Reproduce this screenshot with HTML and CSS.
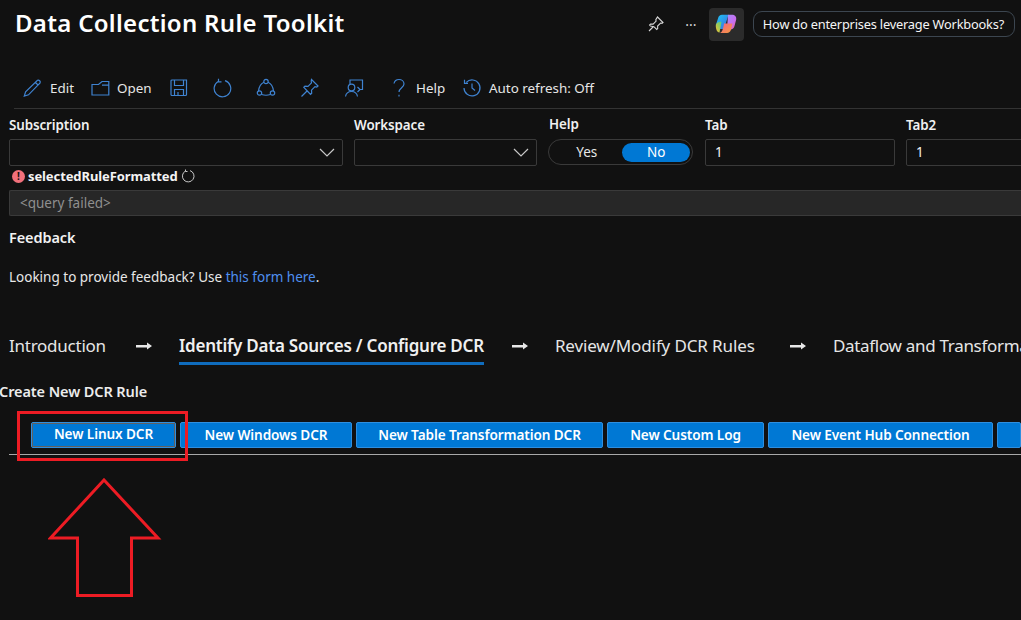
FILE: index.html
```html
<!DOCTYPE html>
<html lang="en">
<head>
<meta charset="utf-8">
<title>Data Collection Rule Toolkit</title>
<link rel="stylesheet" href="styles.css">
</head>
<body>
<div class="page">
  <header class="header">
    <h1 class="title">Data Collection Rule Toolkit</h1>
    <div class="header-actions">
      <svg class="hdr-pin" width="18" height="18" viewBox="0 0 18 18" fill="none" stroke="#d6d6d6" stroke-width="1.1"><path d="M10.500 2 16 7.500l-1 .8-1.400-.3-3 3 .1 2.500-1 1L6.900 11.700 3.500 11l-.9-1 1-1 2.500.1 3-3-.3-1.400zM6.500 11.500 2 16"/></svg>
      <span class="dots">···</span>
      <span class="copilot">
        <svg width="22" height="20" viewBox="0 0 22 20">
          <defs>
            <linearGradient id="cg1" x1="0" y1="0" x2="1" y2="1"><stop offset="0" stop-color="#1fc8f5"/><stop offset=".6" stop-color="#2f8fe8"/><stop offset="1" stop-color="#3f6fe0"/></linearGradient>
            <linearGradient id="cg2" x1="0" y1="0" x2="1" y2="1"><stop offset="0" stop-color="#a98cf8"/><stop offset=".6" stop-color="#c86cf0"/><stop offset="1" stop-color="#f2637a"/></linearGradient>
            <linearGradient id="cg3" x1="0" y1="1" x2="1" y2="0"><stop offset="0" stop-color="#fbc22c"/><stop offset="1" stop-color="#4fd080"/></linearGradient>
            <linearGradient id="cg4" x1="0" y1="0" x2="1" y2="1"><stop offset="0" stop-color="#f0608a"/><stop offset="1" stop-color="#f79a3c"/></linearGradient>
          </defs>
          <path d="M7 .8h6.500L9 15H5.500C2.500 15 .5 13 1 10.500L3 4.500C3.600 2 5 .8 7 .8z" fill="url(#cg1)"/>
          <path d="M1 10.500c1-2 3.500-3 5.500-2.500L4.500 18.500H4C1.500 18 .3 13 1 10.500z" fill="url(#cg3)"/>
          <path d="M13 .8h4c2.700 0 4.700 2 4.200 4.700L19.500 12c-.5 2-2 3.500-4 3.500H12z" fill="url(#cg2)"/>
          <path d="M9 9.500h8.500l-1.500 6c-.5 2-2 3.500-4 3.500H4.500C7.500 19 8.500 13 9 9.500z" fill="url(#cg4)"/>
        </svg>
      </span>
      <span class="prompt">How do enterprises leverage Workbooks?</span>
    </div>
  </header>

  <nav class="toolbar">
    <span class="tool tool-edit">
      <svg width="20" height="20" viewBox="0 0 20 20" class="ico"><path d="M15.500 2.300a2 2 0 0 1 2.600 2.600L6.500 16.800l-4.200 1.300 1.300-4.200zM13.500 4.500l2.500 2.500"/></svg>
      <span>Edit</span>
    </span>
    <span class="tool tool-open">
      <svg width="20" height="20" viewBox="0 0 20 20" class="ico"><path d="M2 17V6.500h6.500L12 3.500h6.800V17zM12 7.200h6.800M2 6.500 8.500 6.500"/></svg>
      <span>Open</span>
    </span>
    <svg width="20" height="20" viewBox="0 0 20 20" class="ico icon-only save"><path d="M3 2h14.500v14.500a1 1 0 0 1-1 1H3a1 1 0 0 1-1-1V3a1 1 0 0 1 1-1zM5.500 2v5.500h9V2M5.500 17.500v-6h9v6M9 14v3.500"/></svg>
    <svg width="20" height="20" viewBox="0 0 20 20" class="ico icon-only redo"><path d="M6.500 3.200A8.300 8.300 0 1 0 13 2.600M6.500 .8v3h3"/></svg>
    <svg width="20" height="20" viewBox="0 0 20 20" class="ico icon-only share"><circle cx="10" cy="3.500" r="2.200"/><circle cx="3.500" cy="15" r="2.200"/><circle cx="16.500" cy="15" r="2.200"/><path d="M7.900 4.200C5 5.500 3 8.500 2.500 13M12.100 4.200c3 1.300 4.900 4.300 5.400 8.800M5.700 16.500c2.800 1 5.800 1 8.600 0"/></svg>
    <svg width="20" height="20" viewBox="0 0 20 20" class="ico icon-only pin"><path d="M11.500 1.500 18 8l-1.200 1-1.800-.3-3.500 3.500.2 3-1.200 1.200L7.300 13 3.800 9.300l1.200-1.200 3 .2 3.500-3.500-.3-1.800zM7 13l-5.500 5.500"/></svg>
    <svg width="20" height="20" viewBox="0 0 20 20" class="ico icon-only feedback"><path d="M6 6V2h12.500v9.500H16M16 11.500l-2.500-2.500M16 11.500l-2.500 2.500"/><circle cx="7.500" cy="9.500" r="3.300"/><path d="M1.500 18.500c.5-3 2.800-5 6-5s5.500 2 6 5"/></svg>
    <span class="tool tool-help">
      <svg width="14" height="20" viewBox="0 0 14 20" class="ico"><path d="M2 5.500C2.500 3 4.500 1.500 7 1.500s5 1.700 5 4.500c0 3.500-5 4-5 8"/><path d="M7 16.800v1.600"/></svg>
      <span>Help</span>
    </span>
    <span class="tool tool-auto">
      <svg width="20" height="20" viewBox="0 0 20 20" class="ico"><path d="M4.300 4.300A8 8 0 1 1 2 10M2.500 1.800v3.500H6M10 5.500V10l3 2.500"/></svg>
      <span>Auto refresh: Off</span>
    </span>
  </nav>

  <section class="params">
    <div class="field f-sub">
      <label class="lbl">Subscription</label>
      <div class="box select"><svg width="16" height="9" viewBox="0 0 16 9" class="chev"><path d="M1 1l7 7 7-7"/></svg></div>
    </div>
    <div class="field f-work">
      <label class="lbl">Workspace</label>
      <div class="box select"><svg width="16" height="9" viewBox="0 0 16 9" class="chev"><path d="M1 1l7 7 7-7"/></svg></div>
    </div>
    <div class="field f-help">
      <label class="lbl lbl-help">Help</label>
      <div class="toggle"><span class="opt">Yes</span><span class="opt opt-on">No</span></div>
    </div>
    <div class="field f-tab">
      <label class="lbl">Tab</label>
      <div class="box text">1</div>
    </div>
    <div class="field f-tab2">
      <label class="lbl">Tab2</label>
      <div class="box text">1</div>
    </div>
  </section>

  <section class="failed">
    <div class="failed-label">
      <span class="err">!</span>
      <span class="failed-name">selectedRuleFormatted</span>
      <svg width="14" height="14" viewBox="0 0 14 14" class="spin"><path d="M4.500 2A5.800 5.800 0 1 0 9 1.600M4.500 .5v2h2"/></svg>
    </div>
    <div class="failed-box">&lt;query failed&gt;</div>
  </section>

  <section class="feedback-sec">
    <h2 class="fb-title">Feedback</h2>
    <p class="fb-text">Looking to provide feedback? Use <a class="link">this form here</a>.</p>
  </section>

  <div class="tabs">
    <span class="tab t1">Introduction</span>
    <svg class="arrow" width="16" height="28" viewBox="0 0 16 28"><path d="M0 12h11V9.500l5 3.500-5 3.500V14.500H0z"/></svg>
    <span class="tab tab-on">Identify Data Sources / Configure DCR</span>
    <svg class="arrow" width="16" height="28" viewBox="0 0 16 28"><path d="M0 12h11V9.500l5 3.500-5 3.500V14.500H0z"/></svg>
    <span class="tab t3">Review/Modify DCR Rules</span>
    <svg class="arrow" width="16" height="28" viewBox="0 0 16 28"><path d="M0 12h11V9.500l5 3.500-5 3.500V14.500H0z"/></svg>
    <span class="tab t4">Dataflow and Transformation</span>
  </div>

  <h3 class="create">Create New DCR Rule</h3>

  <div class="buttons">
    <span class="btn b1"><span class="focus">New Linux DCR</span></span>
    <span class="btn b2">New Windows DCR</span>
    <span class="btn b3">New Table Transformation DCR</span>
    <span class="btn b4">New Custom Log</span>
    <span class="btn b5">New Event Hub Connection</span>
    <span class="btn b6"></span>
  </div>
  <div class="rule"></div>

  <div class="mark-rect"></div>
  <svg class="mark-arrow" width="114" height="122" viewBox="0 0 114 122"><path d="M56 2 2.500 60h27v57.500h54V60H110z"/></svg>
</div>
</body>
</html>
```
FILE: styles.css
```css
* { box-sizing: border-box; }
html, body { margin: 0; padding: 0; background: #111111; }
body { font-family: "Noto Sans", "Open Sans", "Liberation Sans", sans-serif; color: #f2f2f2; font-size: 13px; }
.page { position: relative; width: 1021px; height: 620px; overflow: hidden; background: #111111; }

.header { display: flex; justify-content: space-between; align-items: center; height: 48px; padding: 0 6px 0 15px; }
.title { margin: 0 0 2px; font-size: 24px; font-weight: 600; color: #fff; line-height: 46px; letter-spacing: .3px; }
.header-actions { display: flex; align-items: center; }
.hdr-pin { margin-right: 19px; }
.dots { width: 14px; margin-right: 11px; text-align: center; color: #d6d6d6; font-size: 14px; }
.copilot { display: flex; align-items: center; justify-content: center; width: 35px; height: 33px; background: #2b2b2b; border-radius: 4px; margin-right: 9px; }
.prompt { height: 26px; line-height: 24px; padding: 0 10px 0 9px; border: 1px solid #3c4650; border-radius: 9px; font-size: 12.800px; color: #f5f5f5; white-space: nowrap; letter-spacing: -.2px; }

.toolbar { display: flex; align-items: center; height: 39px; margin: 22px 0 0 14px; border-bottom: 1px solid #333; padding-bottom: 2px; color: #e6e6e6; }
.tool { display: flex; align-items: center; }
.ico { fill: none; stroke: #3f83d1; stroke-width: 1.200; flex: none; }
.tool-edit { margin-left: 8px; gap: 8px; width: 68px; }
.tool-open { gap: 7px; width: 79px; }
.icon-only.save { margin-right: 23px; }
.icon-only.redo { margin-right: 24px; }
.icon-only.share { margin-right: 24px; }
.icon-only.pin { margin-right: 24px; }
.icon-only.feedback { margin-right: 28px; }
.tool-help { gap: 10px; width: 70px; }
.tool-auto { gap: 7px; }
.tool span { font-size: 13.400px; }

.params { display: flex; height: 58px; padding: 8px 0 0 9px; }
.field { flex: none; display: flex; flex-direction: column; }
.lbl { height: 22px; line-height: 16px; font-size: 13.400px; font-weight: 600; color: #f0f0f0; letter-spacing: -.1px; }
.f-sub { width: 345px; }
.f-work { width: 195px; }
.f-help { width: 156px; }
.f-help .lbl { margin-top: -1px; height: 23px; line-height: 17px; }
.f-tab { width: 201px; }
.f-tab2 { width: 130px; }
.box { height: 27px; border: 1px solid #3a3a3a; border-radius: 2px; position: relative; }
.f-sub .box { width: 334px; }
.f-work .box { width: 183px; }
.f-tab .box { width: 190px; }
.f-tab2 .box { width: 130px; }
.select { display: flex; align-items: center; justify-content: flex-end; padding-right: 7px; }
.chev { fill: none; stroke: #c8c8c8; stroke-width: 1.200; }
.text { line-height: 25px; padding-left: 9px; font-size: 13.500px; color: #f2f2f2; }
.toggle { display: flex; align-items: center; width: 145px; height: 26px; margin-left: -1px; border: 1px solid #3a3a3a; border-radius: 13px; padding: 0 2px 0 2px; }
.opt { width: 72px; height: 19px; line-height: 18px; text-align: center; font-size: 13.500px; color: #e8e8e8; border-radius: 10px; }
.opt-on { background: #0078d4; color: #fff; width: 68px; }

.failed { padding: 0 0 0 9px; margin-top: -2px; }
.failed-label { display: flex; align-items: center; height: 22px; margin: 0 0 3px 3px; }
.err { width: 13px; height: 13px; border-radius: 50%; background: #f1707b; color: #111; font-size: 10px; font-weight: 700; line-height: 13px; text-align: center; margin-right: 3px; }
.failed-name { font-size: 13px; font-weight: 700; color: #f4f4f4; letter-spacing: -.1px; margin-right: 3px; }
.spin { fill: none; stroke: #c8c8c8; stroke-width: 1; }
.failed-box { height: 26px; line-height: 24px; width: 1012px; padding-left: 10px; background: #272727; border: 1px solid #3a3a3a; border-right: 0; border-radius: 2px 0 0 2px; color: #8f8f8f; font-size: 13.500px; }

.feedback-sec { padding-left: 9px; }
.fb-title { margin: 11px 0 0; font-size: 14.500px; font-weight: 600; line-height: 20px; color: #f2f2f2; letter-spacing: -.1px; }
.fb-text { margin: 21px 0 0; font-size: 13.500px; line-height: 18px; color: #e8e8e8; }
.link { color: #4f8ff0; }

.tabs { display: flex; align-items: flex-start; height: 32px; margin-top: 47px; padding-left: 9px; white-space: nowrap; }
.tab { flex: none; display: block; height: 32px; line-height: 26px; font-size: 17px; color: #e6e6e6; letter-spacing: -.25px; }
.t1 { width: 127px; }
.tab-on { font-weight: 600; border-bottom: 3px solid #0f6cbd; color: #f0f0f0; letter-spacing: -.24px; }
.arrow { flex: none; fill: #e8e8e8; }
.t1 + .arrow { margin-right: 27px; }
.tab-on + .arrow { margin-left: 28px; margin-right: 27px; }
.t3 { width: 200px; margin-right: 35px; letter-spacing: -.12px; }
.t3 + .arrow { margin-right: 27px; }
.t4 { width: 188px; letter-spacing: -.3px; overflow: hidden; }

.create { margin: 16px 0 0 -1px; font-size: 14.500px; font-weight: 600; line-height: 20px; color: #ececec; letter-spacing: -.1px; }

.buttons { display: flex; gap: 4px; margin: 21px 0 0 31px; white-space: nowrap; }
.btn { flex: none; height: 26px; line-height: 23px; background: #0078d4; border: 1px solid #2f8fdf; border-radius: 2px; color: #fff; text-align: center; font-size: 13.600px; font-weight: 600; letter-spacing: -.1px; }
.focus { display: block; height: 22px; margin: 1px; line-height: 20px; outline: 1px solid #606060; }
.b1 { width: 145px; }
.b2 { width: 172px; }
.b3 { width: 247px; }
.b4 { width: 157px; }
.b5 { width: 225px; }
.b6 { width: 24px; }
.rule { height: 1px; margin: 6px 0 0 9px; background: #a8a8a8; }

.mark-rect { position: absolute; left: 17px; top: 411px; width: 171px; height: 50px; border: 3px solid #ed1c24; }
.mark-arrow { position: absolute; left: 48px; top: 478px; fill: none; stroke: #ed1c24; stroke-width: 3; }
```
